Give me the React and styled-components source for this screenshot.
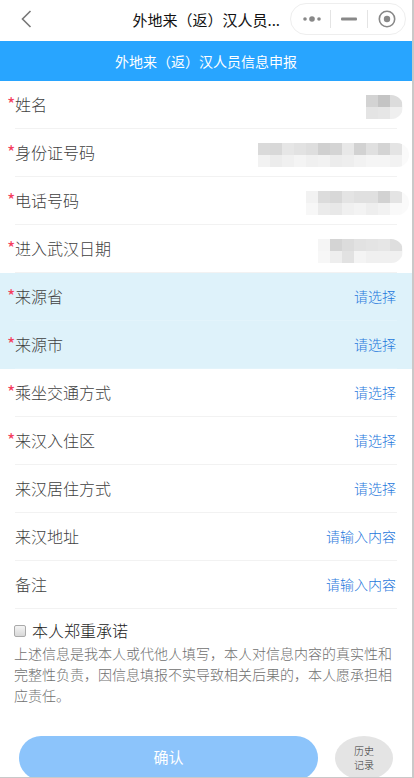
import React from "react";
import styled, { createGlobalStyle } from "styled-components";

const GlobalStyle = createGlobalStyle`
  html, body {
    margin: 0;
    padding: 0;
    background: #fff;
  }
  body {
    font-family: "Noto Sans CJK SC", "Liberation Sans", sans-serif;
  }
`;

const Page = styled.div`
  width: 414px;
  height: 778px;
  overflow: hidden;
  box-sizing: border-box;
  border-right: 2px solid #c9c9c9;
  border-bottom: 1px solid #c9c9c9;
  position: relative;
`;

const NavBar = styled.div`
  height: 41px;
  display: flex;
  align-items: center;
  padding: 0 6px 3px 20px;
  box-sizing: border-box;
`;

const Back = styled.div`
  width: 14px;
  height: 20px;
  display: flex;
`;

const NavTitle = styled.div`
  flex: 1;
  text-align: right;
  padding-right: 10px;
  font-size: 15px;
  color: #111;
  white-space: nowrap;
`;

const Capsule = styled.div`
  width: 116px;
  height: 32px;
  border: 1px solid #eeeeee;
  border-radius: 16px;
  box-sizing: border-box;
  display: grid;
  grid-template-columns: 39px 37px 38px;
  align-items: center;
`;

const CapsuleCell = styled.div`
  height: 18px;
  display: flex;
  align-items: center;
  justify-content: center;
  &:first-child {
    padding-left: 3px;
  }
  & + & {
    border-left: 1px solid #e4e4e4;
  }
`;

const Banner = styled.div`
  height: 40px;
  background: #28a5ff;
  color: #fff;
  font-size: 14px;
  display: flex;
  align-items: center;
  justify-content: center;
`;

const Row = styled.div`
  height: 48px;
  display: flex;
  align-items: center;
  background: ${(p) => (p.$hi ? "#def2fa" : "transparent")};
  padding: 0 16px 2px 7px;
  box-sizing: border-box;
  position: relative;
  &::after {
    content: "";
    position: absolute;
    left: 15px;
    right: 15px;
    bottom: 0;
    height: 1px;
    background: ${(p) => (p.$hi ? "#e3f4fb" : "#f2f2f2")};
  }
`;

const Star = styled.span`
  width: 8px;
  color: #f5405f;
  font-size: 18px;
  line-height: 1;
  margin-top: -2px;
`;

const Label = styled.span`
  flex: 1;
  font-size: 16px;
  font-weight: 300;
  color: #3f3f3f;
`;

const Value = styled.span`
  font-size: 14px;
  font-weight: 300;
  color: #1f78dc;
`;

const Blur = styled.div`
  display: grid;
  grid-template-columns: repeat(${(p) => p.$cols}, 12px);
  grid-auto-rows: 12px;
  margin: 6px ${(p) => -(6 + p.$tail)}px 0 0;
  padding-right: ${(p) => p.$tail}px;
  background: #fafafa;
  border-radius: 0 12px 12px 0;
  overflow: hidden;
`;

const Cell = styled.div`
  background: ${(p) => p.$c};
`;

const Promise_ = styled.div`
  padding: 9px 20px 0 14px;
`;

const CheckLine = styled.label`
  display: flex;
  align-items: center;
  gap: 6px;
  font-size: 16px;
  font-weight: 300;
  color: #222;
  line-height: 25px;
`;

const Box = styled.span`
  width: 10px;
  height: 10px;
  border: 1px solid #aaa;
  border-radius: 2px;
  background: linear-gradient(#f4f4f4, #d8d8d8);
`;

const Note = styled.p`
  margin: 0;
  font-size: 14px;
  font-weight: 300;
  line-height: 21px;
  color: #707070;
`;

const Actions = styled.div`
  display: flex;
  align-items: flex-start;
  padding: 30px 19px 0 19px;
  justify-content: space-between;
`;

const Confirm = styled.div`
  width: 299px;
  height: 44px;
  border-radius: 22px;
  background: #8cc4fb;
  color: #fff;
  font-size: 15px;
  padding-bottom: 4px;
  box-sizing: border-box;
  display: flex;
  align-items: center;
  justify-content: center;
`;

const History = styled.div`
  width: 58px;
  height: 44px;
  border-radius: 50%;
  background: #e4e4e4;
  color: #333;
  font-size: 10px;
  font-weight: 300;
  line-height: 14px;
  text-align: center;
  display: flex;
  align-items: center;
  justify-content: center;
`;

const shades = (top, bottom) => [...top, ...bottom];

const rows = [
  { label: "姓名", req: true, cols: 3, tail: 1, cells: shades(["#d3d3d3", "#c4c4c4", "#dcdcdc"], ["#e4e4e4", "#e6e6e6", "#efefef"]) },
  { label: "身份证号码", req: true, cols: 12, tail: 7, cells: shades(["#dadada", "#d8d8d8", "#e6e6e6", "#e2e2e2", "#dedede", "#d0d0d0", "#d4d4d4", "#e8e8e8", "#d2d2d2", "#e0e0e0", "#d4d4d4", "#e4e4e4"], ["#f2f2f2", "#ececec", "#f0f0f0", "#f4f4f4", "#f0f0f0", "#f2f2f2", "#ececec", "#eeeeee", "#f2f2f2", "#f5f5f5", "#f5f5f5", "#f2f2f2"]) },
  { label: "电话号码", req: true, cols: 8, tail: 7, cells: shades(["#f2f2f2", "#dcdcdc", "#d8d8d8", "#e4e4e4", "#e0e0e0", "#e0e0e0", "#d2d2d2", "#e4e4e4"], ["#f7f7f7", "#ebebeb", "#e8e8e8", "#f0f0f0", "#f3f3f3", "#eeeeee", "#f2f2f2", "#f9f9f9"]) },
  { label: "进入武汉日期", req: true, cols: 7, tail: 1, cells: shades(["#f5f5f5", "#d4d4d4", "#dcdcdc", "#e2e2e2", "#e4e4e4", "#e6e6e6", "#dedede"], ["#f7f7f7", "#eeeeee", "#e2e2e2", "#f4f4f4", "#f0f0f0", "#f0f0f0", "#f0f0f0"]) },
  { label: "来源省", req: true, hi: true, value: "请选择" },
  { label: "来源市", req: true, hi: true, value: "请选择" },
  { label: "乘坐交通方式", req: true, value: "请选择" },
  { label: "来汉入住区", req: true, value: "请选择" },
  { label: "来汉居住方式", value: "请选择" },
  { label: "来汉地址", value: "请输入内容" },
  { label: "备注", value: "请输入内容" },
];

const App = () => (
  <Page>
    <GlobalStyle />
    <NavBar>
      <Back>
        <svg width="14" height="20" viewBox="0 0 14 20" fill="none" stroke="#777" strokeWidth="1.6">
          <path d="M10.5 2 L2.5 10 L10.5 18" />
        </svg>
      </Back>
      <NavTitle>外地来（返）汉人员...</NavTitle>
      <Capsule>
        <CapsuleCell>
          <svg width="20" height="8" viewBox="0 0 20 8" fill="#888">
            <circle cx="3" cy="4" r="1.8" />
            <circle cx="10" cy="4" r="2.8" />
            <circle cx="17" cy="4" r="1.8" />
          </svg>
        </CapsuleCell>
        <CapsuleCell>
          <svg width="16" height="4" viewBox="0 0 16 4" fill="#888">
            <rect width="16" height="3" y="0.5" rx="1" />
          </svg>
        </CapsuleCell>
        <CapsuleCell>
          <svg width="18" height="18" viewBox="0 0 18 18">
            <circle cx="9" cy="9" r="7.7" fill="none" stroke="#888" strokeWidth="1.6" />
            <circle cx="9" cy="9" r="3.2" fill="#888" />
          </svg>
        </CapsuleCell>
      </Capsule>
    </NavBar>
    <Banner>外地来（返）汉人员信息申报</Banner>
    {rows.map((r) => (
      <Row key={r.label} $hi={r.hi}>
        <Star>{r.req ? "*" : ""}</Star>
        <Label>{r.label}</Label>
        {r.value && <Value>{r.value}</Value>}
        {r.cells && (
          <Blur $cols={r.cols} $tail={r.tail}>
            {r.cells.map((c, i) => (
              <Cell key={i} $c={c} />
            ))}
          </Blur>
        )}
      </Row>
    ))}
    <Promise_>
      <CheckLine>
        <Box />
        本人郑重承诺
      </CheckLine>
      <Note>
        上述信息是我本人或代他人填写，本人对信息内容的真实性和完整性负责，因信息填报不实导致相关后果的，本人愿承担相应责任。
      </Note>
    </Promise_>
    <Actions>
      <Confirm>确认</Confirm>
      <History>
        <span>
          历史
          <br />
          记录
        </span>
      </History>
    </Actions>
  </Page>
);

export default App;
